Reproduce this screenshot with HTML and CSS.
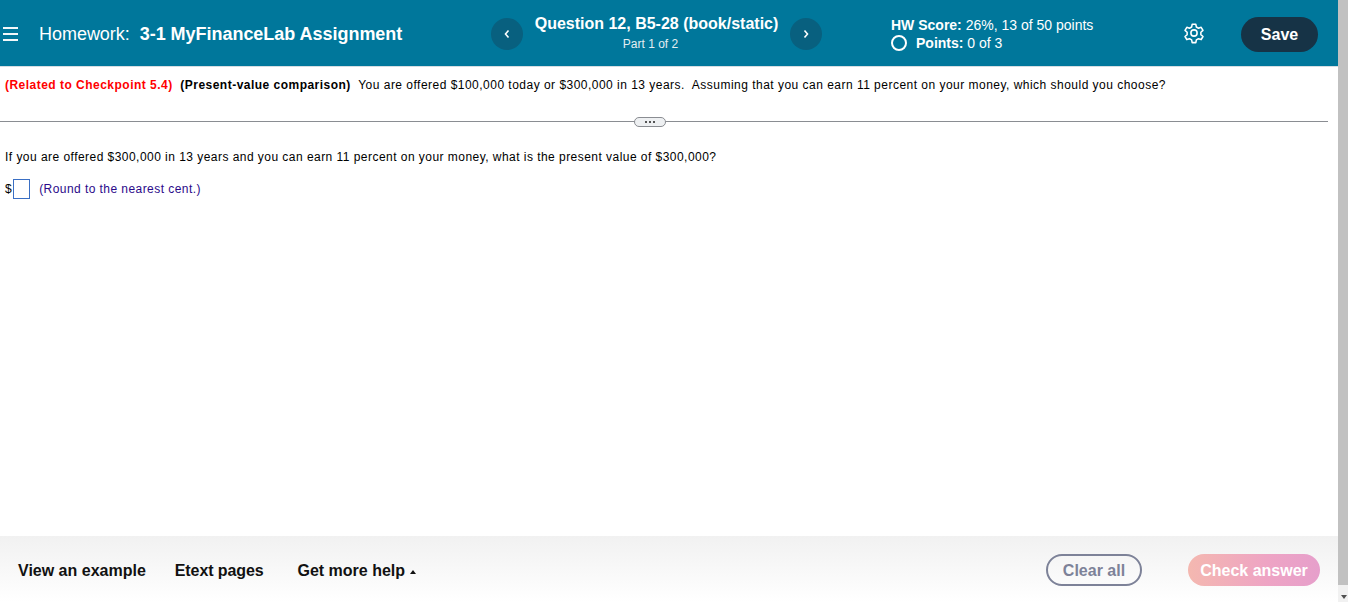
FILE: index.html
```html
<!DOCTYPE html>
<html>
<head>
<meta http-equiv="Content-Type" content="text/html; charset=utf-8"/>
<title>Homework: 3-1 MyFinanceLab Assignment</title>
<link rel="stylesheet" href="styles.css">
</head>
<body>
<div class="page">
  <div class="main">
    <header class="topbar">
      <div class="menu-icon"><span></span><span></span><span></span></div>
      <div class="hw-title">Homework:&nbsp; <b>3-1 MyFinanceLab Assignment</b></div>
      <div class="nav-group">
        <button class="nav-btn">
          <svg width="8" height="10" viewBox="0 0 8 10"><path d="M5.5 1.5 L2.5 5 L5.5 8.5" fill="none" stroke="#fff" stroke-width="1.6"/></svg>
        </button>
        <div class="q-title">
          <div class="q-name">Question 12, B5-28 (book/static)</div>
          <div class="q-part">Part 1 of 2</div>
        </div>
        <button class="nav-btn">
          <svg width="8" height="10" viewBox="0 0 8 10"><path d="M2.5 1.5 L5.5 5 L2.5 8.5" fill="none" stroke="#fff" stroke-width="1.6"/></svg>
        </button>
      </div>
      <div class="score">
        <div><b>HW Score:</b> 26%, 13 of 50 points</div>
        <div class="points"><i class="ring"></i><span><b>Points:</b> 0 of 3</span></div>
      </div>
      <svg class="gear" width="22" height="22" viewBox="0 0 24 24" fill="none" stroke="#fff" stroke-width="1.7" stroke-linejoin="round">
        <circle cx="12" cy="12" r="3.4"/>
        <path d="M10 2.5h4l.6 3 2.3 1.3 2.9-1 2 3.4-2.3 2v2.600l2.300 2-2 3.400-2.900-1-2.300 1.300-.6 3h-4l-.6-3-2.300-1.300-2.900 1-2-3.400 2.300-2v-2.600l-2.300-2 2-3.400 2.900 1 2.300-1.300z"/>
      </svg>
      <button class="save-btn">Save</button>
    </header>

    <section class="question">
      <p class="stem"><span class="related">(Related to Checkpoint 5.4)</span>&nbsp; <b>(Present-value comparison)</b>&nbsp; You are offered $100,000 today or $300,000 in 13 years.&nbsp; Assuming that you can earn 11 percent on your money, which should you choose?</p>
      <div class="divider"><span class="more"><i></i><i></i><i></i></span></div>
      <p class="ask">If you are offered $300,000 in 13 years and you can earn 11 percent on your money, what is the present value of $300,000?</p>
      <div class="answer">$<span class="blank"></span><span class="hint">(Round to the nearest cent.)</span></div>
    </section>

    <footer class="bottombar">
      <a class="tool-link example">View an example</a>
      <a class="tool-link etext">Etext pages</a>
      <a class="tool-link">Get more help <i class="caret"></i></a>
      <button class="clear-btn">Clear all</button>
      <button class="check-btn">Check answer</button>
    </footer>
  </div>
  <div class="scrollbar"><div class="thumb"></div><i class="down"></i></div>
</div>
</body>
</html>
```
FILE: styles.css
```css
html, body {
  margin: 0;
  height: 100%;
  overflow: hidden;
  background-color: white;
  font-family: "Liberation Sans", Arial, sans-serif;
}

button {
  font-family: inherit;
  border: none;
  padding: 0;
}

.page {
  display: flex;
  height: 602px;
}

.main {
  flex: 1;
  display: flex;
  flex-direction: column;
  min-width: 0;
}

/* top bar */
.topbar {
  height: 67px;
  flex: none;
  box-sizing: border-box;
  padding-top: 2px;
  display: flex;
  align-items: center;
  background-color: #00779b;
  border-bottom: 1px solid #d5dde2;
  color: white;
}

.menu-icon {
  width: 15px;
  margin-left: 3px;
  display: flex;
  flex-direction: column;
  gap: 4px;
}

.menu-icon span {
  height: 2px;
  background-color: #f2f8fa;
}

.hw-title {
  margin-left: 21px;
  width: 452px;
  font-size: 18px;
  letter-spacing: -0.03px;
}

.nav-group {
  display: flex;
  align-items: center;
  width: 331px;
}

.nav-btn {
  width: 32px;
  height: 32px;
  border-radius: 50%;
  background-color: #08607f;
  display: flex;
  align-items: center;
  justify-content: center;
  flex: none;
}

.q-title {
  flex: 1;
  text-align: center;
  margin-top: -2px;
}

.q-name {
  font-size: 16px;
  font-weight: bold;
  line-height: 20px;
}

.q-part {
  font-size: 12px;
  line-height: 18px;
  margin-top: 1px;
  padding-right: 12px;
  color: #e3eef2;
}

.score {
  margin-left: 69px;
  width: 293px;
  font-size: 14px;
  line-height: 18px;
}

.points {
  display: flex;
  align-items: center;
  gap: 9px;
}

.ring {
  width: 12px;
  height: 12px;
  border: 2px solid white;
  border-radius: 50%;
}

.gear {
  flex: none;
  margin: -2px 0 0 -1px;
}

.save-btn {
  margin-left: 36px;
  width: 77px;
  height: 35px;
  padding-top: 1px;
  border-radius: 18px;
  background-color: #163346;
  color: white;
  font-size: 16px;
  font-weight: bold;
}

/* question */
.question {
  flex: 1;
  font-size: 12px;
  color: #000;
}

.question p {
  margin: 0;
}

.stem {
  padding: 11px 0 0 5px;
  line-height: 14px;
  letter-spacing: 0.48px;
}

.related {
  color: #f00;
  font-weight: bold;
}

.divider {
  margin: 29px 10px 0 0;
  padding-right: 28px;
  height: 1px;
  background-color: #8a8d92;
  display: flex;
  justify-content: center;
  align-items: center;
}

.more {
  width: 30px;
  height: 8px;
  border: 1px solid #8a8d92;
  border-radius: 5px;
  background-color: #eef0f2;
  display: flex;
  align-items: center;
  justify-content: center;
  gap: 2px;
  flex: none;
}

.more i {
  width: 2px;
  height: 2px;
  background-color: #555;
}

.ask {
  padding: 28px 0 0 5px;
  line-height: 14px;
  letter-spacing: 0.46px;
}

.answer {
  display: flex;
  align-items: center;
  padding: 15px 0 0 5px;
  letter-spacing: 0.44px;
}

.blank {
  width: 15px;
  height: 18px;
  margin-left: 1px;
  border: 1px solid #3a6fc4;
}

.hint {
  margin-left: 9px;
  color: #2b0a8a;
}

/* bottom bar */
.bottombar {
  height: 66px;
  flex: none;
  display: flex;
  align-items: center;
  padding: 2px 18px 0;
  box-sizing: border-box;
  background: linear-gradient(#f1f1f1, #ffffff);
}

.tool-link {
  margin-top: 2px;
  font-size: 16px;
  font-weight: bold;
  color: #111;
}

.example {
  margin-right: 29px;
}

.etext {
  margin-right: 34px;
  letter-spacing: -0.1px;
}

.caret {
  display: inline-block;
  width: 0;
  height: 0;
  border-left: 3.5px solid transparent;
  border-right: 3.5px solid transparent;
  border-bottom: 4px solid #111;
  vertical-align: 2px;
}

.clear-btn {
  margin-left: auto;
  width: 96px;
  height: 32px;
  box-sizing: border-box;
  padding-top: 1px;
  border: 2px solid #7d8298;
  border-radius: 16px;
  background: transparent;
  color: #7d8298;
  font-size: 16px;
  font-weight: bold;
}

.check-btn {
  margin-left: 46px;
  width: 132px;
  height: 32px;
  padding-top: 1px;
  border-radius: 16px;
  background: linear-gradient(90deg, #f4b8b0, #eea4c4 60%, #e69fcb);
  color: white;
  font-size: 16px;
  font-weight: bold;
}

/* scrollbar */
.scrollbar {
  width: 10px;
  flex: none;
  position: relative;
  background-color: #f1f1f1;
}

.thumb {
  height: 585px;
  background-color: #c1c1c1;
}

.down {
  position: absolute;
  bottom: 3px;
  left: 3px;
  width: 0;
  height: 0;
  border-left: 3px solid transparent;
  border-right: 3px solid transparent;
  border-top: 4px solid #505050;
}
```
